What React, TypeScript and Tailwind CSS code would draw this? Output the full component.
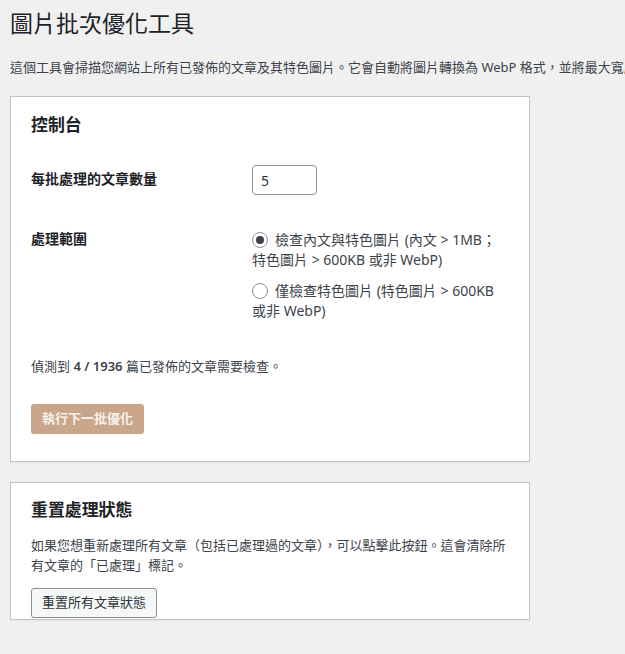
import React from "react";

function Radio({ checked }: { checked?: boolean }) {
  return (
    <span className="relative inline-block w-4 h-4 mr-[7px] align-[-3px] rounded-full border border-[#8c8f94] bg-white">
      {checked && (
        <span className="absolute left-1/2 top-1/2 w-2 h-2 -translate-x-1/2 -translate-y-1/2 rounded-full bg-[#3c434a]" />
      )}
    </span>
  );
}

export default function App() {
  return (
    <div className="min-h-screen w-full overflow-hidden bg-[#f0f0f1] text-[#3c434a] font-['Noto_Sans','Noto_Sans_CJK_TC',sans-serif]">
      <div className="pl-[10px]">
        <h1 className="pt-[9px] pb-[4px] text-[23px] leading-[29.9px] font-normal text-[#1d2327]">
          圖片批次優化工具
        </h1>
        <p className="mt-[15px] text-[13px] leading-[19.5px] whitespace-nowrap">
          這個工具會掃描您網站上所有已發佈的文章及其特色圖片。它會自動將圖片轉換為 WebP 格式，並將最大寬度限制為 1920px，以提升網站載入速度。
        </p>

        <div className="mt-[18.8px] w-[520px] border border-[#c3c4c7] bg-white shadow-[0_1px_1px_rgba(0,0,0,0.04)] px-[20px] pt-[16px] pb-[27px]">
          <h2 className="text-[16.9px] leading-[24px] font-semibold text-[#1d2327]">控制台</h2>

          <div className="mt-[13px] flex">
            <div className="w-[221px] pt-[20px] text-[14px] leading-[18px] font-semibold text-[#1d2327]">
              每批處理的文章數量
            </div>
            <div className="py-[15px]">
              <input
                type="text"
                defaultValue="5"
                className="block h-[30px] w-[65px] rounded-[4px] border border-[#8c8f94] bg-white px-[8px] text-[14px] text-[#2c3338] outline-none"
              />
            </div>
          </div>

          <div className="flex">
            <div className="w-[221px] pt-[20px] text-[14px] leading-[18px] font-semibold text-[#1d2327]">
              處理範圍
            </div>
            <div className="pt-[15px] text-[14px] leading-[20px] text-[#3c434a]">
              <div className="mt-[5px]">
                <Radio checked />
                檢查內文與特色圖片 (內文 &gt; 1MB；
                <br />
                特色圖片 &gt; 600KB 或非 WebP)
              </div>
              <div className="mt-[11px]">
                <Radio />
                僅檢查特色圖片 (特色圖片 &gt; 600KB
                <br />
                或非 WebP)
              </div>
            </div>
          </div>

          <p className="mt-[35px] text-[13px] leading-[20px]">
            偵測到 <strong className="font-semibold">4 / 1936</strong> 篇已發佈的文章需要檢查。
          </p>

          <button
            type="button"
            disabled
            className="mt-[28px] h-[30px] rounded-[3px] bg-[#c9a68a] px-[11px] text-[13px] font-semibold text-[#f8f3ee]"
          >
            執行下一批優化
          </button>
        </div>

        <div className="mt-[20px] w-[520px] border border-[#c3c4c7] bg-white shadow-[0_1px_1px_rgba(0,0,0,0.04)] px-[20px] pt-[16px] pb-[1px]">
          <h2 className="text-[16.9px] leading-[22px] font-semibold text-[#1d2327]">重置處理狀態</h2>
          <p className="mt-[15px] text-[13px] leading-[19.5px]">
            如果您想重新處理所有文章（包括已處理過的文章），可以點擊此按鈕。這會清除所
            <br />
            有文章的「已處理」標記。
          </p>
          <button
            type="button"
            className="mt-[13px] h-[30px] rounded-[3px] border border-[#8c8f94] bg-[#f6f7f7] px-[10px] text-[13px] text-[#2c3338]"
          >
            重置所有文章狀態
          </button>
        </div>
      </div>
    </div>
  );
}
